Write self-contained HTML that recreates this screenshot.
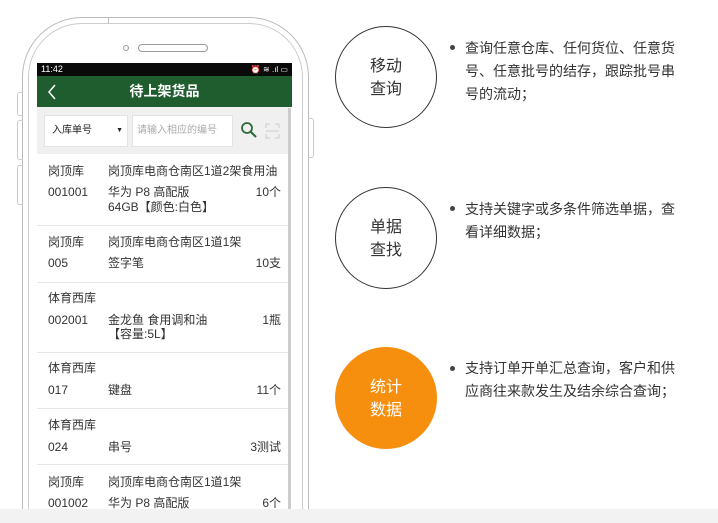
<!DOCTYPE html>
<html style="width:718px;height:523px;overflow:hidden"><head><meta charset="utf-8"><style>
*{margin:0;padding:0;box-sizing:border-box}
body{width:718px;height:523px;background:#fff;position:relative;overflow:hidden;font-family:"Liberation Sans","Noto Sans CJK SC",sans-serif;color:#333}
.abs{position:absolute}
.t{position:absolute;font-size:12px;color:#333;white-space:nowrap;line-height:14px}
.r{text-align:right;right:437px}
.div{position:absolute;left:37px;width:251px;height:1px;background:#e6e6e6}
.circ{position:absolute;width:102px;height:102px;border-radius:50%;border:1px solid #333;text-align:center;font-size:16px;line-height:23px;color:#333;padding-top:28px}
.desc{position:absolute;left:465px;font-size:14px;line-height:23px;color:#333;width:212px}
.dot{position:absolute;left:450px;width:5px;height:5px;border-radius:50%;background:#444}
</style></head><body>
<!-- phone outline -->
<div class="abs" style="left:22px;top:17px;width:287px;height:492px;border:1px solid #bbb;border-bottom:none;border-radius:60px 60px 0 0"></div>
<div class="abs" style="left:28px;top:23px;width:275px;height:486px;border:1px solid #ccc;border-bottom:none;border-radius:54px 54px 0 0"></div>
<div class="abs" style="left:108px;top:17px;width:1px;height:6px;background:#bbb"></div>
<div class="abs" style="left:17px;top:92px;width:6px;height:24px;border:1px solid #ccc;border-right:none;border-radius:3px 0 0 3px"></div>
<div class="abs" style="left:17px;top:120px;width:6px;height:40px;border:1px solid #ccc;border-right:none;border-radius:3px 0 0 3px"></div>
<div class="abs" style="left:17px;top:165px;width:6px;height:40px;border:1px solid #ccc;border-right:none;border-radius:3px 0 0 3px"></div>
<div class="abs" style="left:308px;top:118px;width:6px;height:40px;border:1px solid #ccc;border-left:none;border-radius:0 3px 3px 0"></div>
<div class="abs" style="left:123px;top:45px;width:6px;height:6px;border:1px solid #999;border-radius:50%"></div>
<div class="abs" style="left:138px;top:44px;width:70px;height:8px;border:1px solid #999;border-radius:4px"></div>
<!-- screen -->
<div class="abs" style="left:37px;top:63px;width:255px;height:446px;background:#fff"></div>
<div class="abs" style="left:37px;top:63px;width:255px;height:13px;background:#0a0a0a;color:#fff;font-size:9px;line-height:13px;padding-left:4px">11:42<span style="position:absolute;right:4px;top:0;font-size:8px">⏰ ≋ .ıl ▭</span></div>
<div class="abs" style="left:37px;top:76px;width:255px;height:31px;background:#1f5c2e;color:#fff;text-align:center;font-size:14px;font-weight:bold;line-height:31px">待上架货品</div>
<svg class="abs" style="left:47px;top:84px" width="10" height="16"><path d="M8 1 L2 8 L8 15" stroke="#fff" stroke-width="1.5" fill="none"/></svg>
<div class="abs" style="left:37px;top:107px;width:251px;height:47px;background:#f0f0f0"></div>
<div class="abs" style="left:44px;top:115px;width:84px;height:32px;background:#fff;border:1px solid #e3e3e3;font-size:10px;line-height:30px;padding-left:7px;color:#222">入库单号<span style="position:absolute;right:4px;font-size:7px">▼</span></div>
<div class="abs" style="left:132px;top:115px;width:101px;height:32px;background:#fff;border:1px solid #e3e3e3;font-size:10px;line-height:30px;padding-left:4px;color:#aaa">请输入相应的编号</div>
<svg class="abs" style="left:240px;top:121px" width="18" height="18"><circle cx="7" cy="7" r="5" stroke="#2e6b3a" stroke-width="1.8" fill="none"/><path d="M11 11 L16 16" stroke="#2e6b3a" stroke-width="2.2"/></svg>
<svg class="abs" style="left:265px;top:123px" width="15" height="16"><path d="M1 5V1H5M10 1H14V5M14 11V15H10M5 15H1V11M1 8H14" stroke="#ccc" stroke-width="1" fill="none"/></svg>
<div class="abs" style="left:288px;top:108px;width:3px;height:401px;background:#ccc"></div>
<!-- rows -->
<div class="t" style="left:48px;top:164px">岗顶库</div><div class="t" style="left:108px;top:164px">岗顶库电商仓南区1道2架食用油</div>
<div class="t" style="left:48px;top:185px">001001</div><div class="t" style="left:108px;top:185px">华为 P8 高配版</div><div class="t r" style="top:185px">10个</div>
<div class="t" style="left:108px;top:200px">64GB【颜色:白色】</div>
<div class="div" style="top:225px"></div>
<div class="t" style="left:48px;top:235px">岗顶库</div><div class="t" style="left:108px;top:235px">岗顶库电商仓南区1道1架</div>
<div class="t" style="left:48px;top:256px">005</div><div class="t" style="left:108px;top:256px">签字笔</div><div class="t r" style="top:256px">10支</div>
<div class="div" style="top:282px"></div>
<div class="t" style="left:48px;top:291px">体育西库</div>
<div class="t" style="left:48px;top:313px">002001</div><div class="t" style="left:108px;top:313px">金龙鱼 食用调和油</div><div class="t r" style="top:313px">1瓶</div>
<div class="t" style="left:108px;top:327px">【容量:5L】</div>
<div class="div" style="top:352px"></div>
<div class="t" style="left:48px;top:361px">体育西库</div>
<div class="t" style="left:48px;top:383px">017</div><div class="t" style="left:108px;top:383px">键盘</div><div class="t r" style="top:383px">11个</div>
<div class="div" style="top:408px"></div>
<div class="t" style="left:48px;top:418px">体育西库</div>
<div class="t" style="left:48px;top:440px">024</div><div class="t" style="left:108px;top:440px">串号</div><div class="t r" style="top:440px">3测试</div>
<div class="div" style="top:464px"></div>
<div class="t" style="left:48px;top:475px">岗顶库</div><div class="t" style="left:108px;top:475px">岗顶库电商仓南区1道1架</div>
<div class="t" style="left:48px;top:496px">001002</div><div class="t" style="left:108px;top:496px">华为 P8 高配版</div><div class="t r" style="top:496px">6个</div>
<div class="abs" style="left:0;top:509px;width:718px;height:14px;background:#f2f2f2"></div>
<!-- right -->
<div class="circ" style="left:335px;top:26px">移动<br>查询</div>
<div class="dot" style="top:45px"></div>
<div class="desc" style="top:37px">查询任意仓库、任何货位、任意货号、任意批号的结存，跟踪批号串号的流动；</div>
<div class="circ" style="left:335px;top:187px">单据<br>查找</div>
<div class="dot" style="top:206px"></div>
<div class="desc" style="top:198px">支持关键字或多条件筛选单据，查看详细数据；</div>
<div class="circ" style="left:335px;top:347px;border:none;background:#f68e0e;color:#fff;padding-top:29px">统计<br>数据</div>
<div class="dot" style="top:366px"></div>
<div class="desc" style="top:357px">支持订单开单汇总查询，客户和供应商往来款发生及结余综合查询；</div>
</body></html>
